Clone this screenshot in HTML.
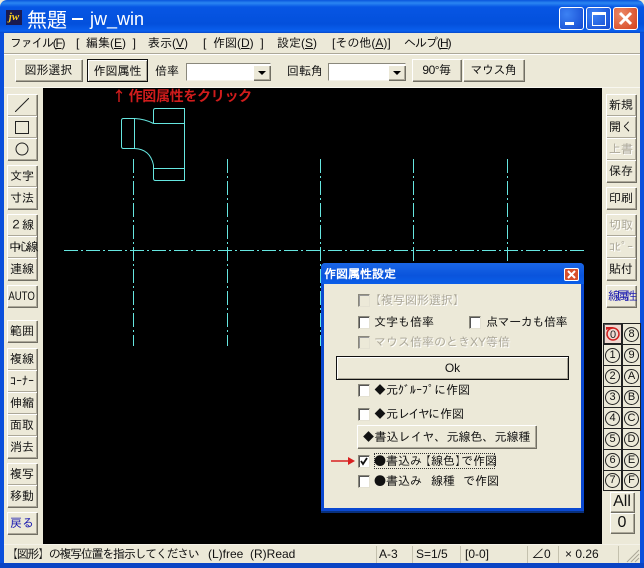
<!DOCTYPE html>
<html lang="ja"><head><meta charset="utf-8"><title>無題 - jw_win</title>
<style>
html,body{margin:0;padding:0;background:#0a3ccc}
#w{position:relative;width:644px;height:568px;overflow:hidden;background:#ECE9D8;font:12px/1 "Liberation Sans","IPAGothic","Noto Sans CJK JP",sans-serif;color:#111}
#w div{position:absolute;box-sizing:border-box;white-space:nowrap}
.b{background:#ECE9D8;box-shadow:inset 1px 1px #fff,inset -1px -1px #aca899,1px 1px #716f64;display:flex;align-items:center;justify-content:center;left:7px;width:30px;height:22px}
.r{left:606px}
.g{color:#aca899;text-shadow:1px 1px #fff}
.l{width:19px;height:21px;background:#ECE9D8;border:1px solid #222;border-width:1px 1px 0 1px;display:flex;align-items:center;justify-content:center}
.o{display:block;box-sizing:border-box;width:15px;height:15px;border:1px solid #222;border-radius:50%;font-size:11px;line-height:13px;text-align:center}
.c{left:358px;width:12px;height:13px;background:#fff;border:1px solid;border-color:#8a887c #e4e1d2 #e4e1d2 #8a887c;box-shadow:inset 1px 1px #555}
.cd{background:#ECE9D8;box-shadow:inset 1px 1px #999}
.t{left:374px;font-size:12px;height:14px;line-height:14px}
.k{font-family:"Noto Sans CJK JP",sans-serif}
.ob{margin-left:-5px}
.cb{margin-right:-6px}
u{text-decoration:underline}
</style></head><body>
<div id="w">
<!-- title bar -->
<div style="left:0;top:0;width:644px;height:33px;background:linear-gradient(#0a55dc 0,#2b86f2 3px,#0756e4 7px,#0350dc 24px,#0a60ee 31px,#0748c8 33px);border-radius:7px 7px 0 0"></div>
<div style="left:6px;top:10px;width:16px;height:15px;background:#1a1a50;color:#ffd21e;font:italic bold 11px/15px 'Liberation Serif',serif;text-align:center">jw</div>
<div style="left:27px;top:8px;color:#fff;font-size:20px;line-height:22px;font-family:'Noto Sans CJK JP',sans-serif">無題</div>
<div style="left:72px;top:18px;width:11px;height:2px;background:#fff"></div>
<div style="left:90px;top:9px;color:#fff;font-size:18px;line-height:20px">jw_win</div>
<div style="left:559px;top:7px;width:25px;height:23px;border-radius:3px;border:1px solid #fff;background:radial-gradient(circle at 30% 30%,#3c82f4,#1348d0)"></div>
<div style="left:565px;top:22px;width:9px;height:3px;background:#fff"></div>
<div style="left:586px;top:7px;width:25px;height:23px;border-radius:3px;border:1px solid #fff;background:radial-gradient(circle at 30% 30%,#3c82f4,#1348d0)"></div>
<div style="left:592px;top:12px;width:14px;height:14px;border:1px solid #fff;border-top:3px solid #fff"></div>
<div style="left:613px;top:7px;width:25px;height:23px;border-radius:3px;border:1px solid #fff;background:radial-gradient(circle at 30% 30%,#ec8a68,#d4401c)"></div>
<svg style="position:absolute;left:613px;top:7px" width="25" height="23"><path d="M7 6L18 17M18 6L7 17" stroke="#fff" stroke-width="3"/></svg>
<!-- side borders -->
<div style="left:0;top:33px;width:4px;height:535px;background:#0a4fdc"></div>
<div style="left:640px;top:33px;width:4px;height:535px;background:#0a4fdc"></div>
<div style="left:0;top:563px;width:644px;height:5px;background:#0a44c4"></div>
<!-- menu -->
<div style="left:4px;top:53px;width:636px;height:2px;background:linear-gradient(#aca899 50%,#fff 50%)"></div>
<div style="left:10px;top:37px;letter-spacing:-1.300px">ファイル(<u>F</u>)</div>
<div style="left:76px;top:37px">[&nbsp;&nbsp;編集(<u>E</u>)&nbsp;&nbsp;]</div>
<div style="left:148px;top:37px">表示(<u>V</u>)</div>
<div style="left:203px;top:37px">[&nbsp;&nbsp;作図(<u>D</u>)&nbsp;&nbsp;]</div>
<div style="left:277px;top:37px">設定(<u>S</u>)</div>
<div style="left:332px;top:37px">[その他(<u>A</u>)]</div>
<div style="left:404px;top:37px;letter-spacing:-1px">ヘルプ(<u>H</u>)</div>
<!-- toolbar -->
<div class="b" style="left:15px;top:59px;width:67px;height:22px">図形選択</div>
<div class="b" style="left:87px;top:59px;width:61px;height:23px;border:1px solid #111;box-shadow:inset 1px 1px #fff,inset -1px -1px #aca899">作図属性</div>
<div style="left:155px;top:65px">倍率</div>
<div style="left:186px;top:63px;width:85px;height:18px;background:#fff;border:1px solid;border-color:#8a887c #f4f2e8 #f4f2e8 #8a887c"></div>
<div class="b" style="left:253px;top:65px;width:17px;height:15px"><svg width="8" height="4"><path d="M0 0H8L4 4Z" fill="#000"/></svg></div>
<div style="left:287px;top:65px">回転角</div>
<div style="left:328px;top:63px;width:78px;height:18px;background:#fff;border:1px solid;border-color:#8a887c #f4f2e8 #f4f2e8 #8a887c"></div>
<div class="b" style="left:388px;top:65px;width:17px;height:15px"><svg width="8" height="4"><path d="M0 0H8L4 4Z" fill="#000"/></svg></div>
<div class="b" style="left:412px;top:59px;width:49px;height:22px;letter-spacing:-.5px">90°毎</div>
<div class="b" style="left:463px;top:59px;width:61px;height:22px;letter-spacing:-.5px">マウス角</div>
<!-- canvas -->
<div style="left:43px;top:88px;width:559px;height:456px;background:#000"></div>
<div style="left:4px;top:87px;width:636px;height:1px;background:#f8f7f0"></div>
<svg style="position:absolute;left:43px;top:88px" width="559" height="456" fill="none" stroke="#66e6e0" stroke-width="1">
<g stroke-dasharray="14 3 2 3">
<path d="M90.500 71V258M184.500 71V258M277.500 71V258M370.500 71V258M464.500 71V258"/>
<path d="M21 162.500H542"/>
</g>
<path d="M110.500 35.500V22.500Q110.500 20.500 112.500 20.500H141.500V92.500H112.500Q110.500 92.500 110.500 90.500V77M110.500 35.500H141.500M110.500 80.500H141.500"/>
<path d="M91.500 30.500H80.500Q78.500 30.500 78.500 32.500V58.500Q78.500 60.500 80.500 60.500H91.500V30.500Q102 31 110.500 35.500M91.500 60.500Q107 61 110.500 77"/>
</svg>
<div style="left:112px;top:88px;color:#d01c1c;font-size:14px;line-height:16px;font-weight:bold;font-family:'Noto Sans CJK JP',sans-serif;letter-spacing:-.3px">↑ 作図属性をクリック</div>
<!-- left buttons -->
<div class="b" style="top:94px"><svg width="14" height="14"><path d="M0 14L14 0" stroke="#222"/></svg></div>
<div class="b" style="top:116px"><svg width="14" height="13"><rect x=".5" y=".5" width="13" height="12" fill="none" stroke="#222"/></svg></div>
<div class="b" style="top:138px"><svg width="14" height="14"><circle cx="7" cy="7" r="6" fill="none" stroke="#222"/></svg></div>
<div class="b" style="top:165px">文字</div>
<div class="b" style="top:187px">寸法</div>
<div class="b" style="top:214px">２線</div>
<div class="b" style="top:236px;letter-spacing:-3.300px">中心線</div>
<div class="b" style="top:258px">連線</div>
<div class="b" style="top:285px"><span style="display:block;transform:scaleX(.8)">AUTO</span></div>
<div class="b" style="top:320px">範囲</div>
<div class="b" style="top:348px">複線</div>
<div class="b" style="top:370px">ｺｰﾅｰ</div>
<div class="b" style="top:392px">伸縮</div>
<div class="b" style="top:414px">面取</div>
<div class="b" style="top:436px">消去</div>
<div class="b" style="top:463px">複写</div>
<div class="b" style="top:485px">移動</div>
<div class="b" style="top:512px;color:#1a1ab0">戻る</div>
<!-- right buttons -->
<div class="b r" style="top:94px">新規</div>
<div class="b r" style="top:116px">開く</div>
<div class="b r g" style="top:138px">上書</div>
<div class="b r" style="top:160px">保存</div>
<div class="b r" style="top:187px">印刷</div>
<div class="b r g" style="top:214px">切取</div>
<div class="b r g" style="top:236px">ｺﾋﾟｰ</div>
<div class="b r" style="top:258px">貼付</div>
<div class="b r" style="top:285px;color:#1a1ab0;letter-spacing:-3.300px">線属性</div>
<!-- layers -->
<div class="l" style="left:603px;top:323px;background:#f0d8d0;border:1px solid #222;box-shadow:inset 1px 1px #555">
<svg width="15" height="15"><circle cx="8" cy="8" r="6" fill="none" stroke="#d02020" stroke-width="1.500"/><path d="M1 1H9L1 4Z" fill="#d02020"/><text x="8" y="12" font-size="11" text-anchor="middle" fill="#222" font-family="Liberation Sans">0</text></svg></div>
<div class="l" style="left:622px;top:323px"><span class="o">8</span></div>
<div class="l" style="left:603px;top:344px"><span class="o">1</span></div><div class="l" style="left:622px;top:344px"><span class="o">9</span></div>
<div class="l" style="left:603px;top:365px"><span class="o">2</span></div><div class="l" style="left:622px;top:365px"><span class="o">A</span></div>
<div class="l" style="left:603px;top:386px"><span class="o">3</span></div><div class="l" style="left:622px;top:386px"><span class="o">B</span></div>
<div class="l" style="left:603px;top:407px"><span class="o">4</span></div><div class="l" style="left:622px;top:407px"><span class="o">C</span></div>
<div class="l" style="left:603px;top:428px"><span class="o">5</span></div><div class="l" style="left:622px;top:428px"><span class="o">D</span></div>
<div class="l" style="left:603px;top:449px"><span class="o">6</span></div><div class="l" style="left:622px;top:449px"><span class="o">E</span></div>
<div class="l" style="left:603px;top:470px;border-bottom-width:1px"><span class="o">7</span></div><div class="l" style="left:622px;top:470px;border-bottom-width:1px"><span class="o">F</span></div>
<div class="b" style="left:610px;top:492px;width:24px;height:20px;font-size:16px">All</div>
<div class="b" style="left:610px;top:513px;width:24px;height:20px;font-size:16px">0</div>
<!-- status bar -->
<div style="left:4px;top:544px;width:636px;height:19px;background:#ECE9D8;border-top:1px solid #f4f2e8"></div>
<div style="left:6px;top:548px;letter-spacing:-1.300px">【図形】の複写位置を指示してください</div>
<div style="left:208px;top:548px">(L)free</div>
<div style="left:250px;top:548px">(R)Read</div>
<div style="left:376px;top:546px;width:1px;height:17px;background:#c4c1ae"></div>
<div style="left:412px;top:546px;width:1px;height:17px;background:#c4c1ae"></div>
<div style="left:460px;top:546px;width:1px;height:17px;background:#c4c1ae"></div>
<div style="left:527px;top:546px;width:1px;height:17px;background:#c4c1ae"></div>
<div style="left:558px;top:546px;width:1px;height:17px;background:#c4c1ae"></div>
<div style="left:618px;top:546px;width:1px;height:17px;background:#c4c1ae"></div>
<div style="left:379px;top:548px">A-3</div>
<div style="left:416px;top:548px">S=1/5</div>
<div style="left:465px;top:548px">[0-0]</div>
<div style="left:532px;top:548px">∠0</div>
<div style="left:565px;top:548px">× 0.26</div>
<svg style="position:absolute;left:626px;top:549px" width="14" height="14"><path d="M1 13L13 1M5 13L13 5M9 13L13 9" stroke="#aca899"/></svg>
<!-- dialog -->
<div style="left:321px;top:263px;width:263px;height:250px;background:#0a48d0;border-radius:4px 4px 0 0;box-shadow:inset 0 -2px #08307c"></div>
<div style="left:321px;top:263px;width:263px;height:21px;background:linear-gradient(#1a66e6,#0a54dc 60%,#0a5ee8);border-radius:4px 4px 0 0"></div>
<div style="left:324px;top:268px;color:#fff;font-weight:bold;font-size:12px">作図属性設定</div>
<div style="left:564px;top:268px;width:15px;height:13px;border:1px solid #fff;border-radius:2px;background:#d8502c"></div>
<svg style="position:absolute;left:564px;top:268px" width="15" height="13"><path d="M4 3L11 10M11 3L4 10" stroke="#fff" stroke-width="2"/></svg>
<div style="left:324px;top:284px;width:257px;height:224px;background:#ECE9D8"></div>

<div class="c cd" style="top:294px"></div><div class="t g" style="top:293px"><span class="ob">【</span>複写図形選択<span class="cb">】</span></div>
<div class="c" style="top:316px"></div><div class="t" style="top:315px">文字も倍率</div>
<div class="c" style="left:469px;top:316px"></div><div class="t" style="left:486px;top:315px;letter-spacing:-.4px">点マーカも倍率</div>
<div class="c cd" style="top:336px"></div><div class="t g" style="top:335px">マウス倍率のときXY等倍</div>
<div class="b" style="left:336px;top:356px;width:233px;height:24px;border:1px solid #111;box-shadow:inset 1px 1px #fff,inset -1px -1px #aca899">Ok</div>
<div class="c" style="top:384px"></div><div class="t" style="top:383px">◆元ｸﾞﾙｰﾌﾟに作図</div>
<div class="c" style="top:408px"></div><div class="t" style="top:407px">◆元<span style="letter-spacing:-2px">レイヤ</span>に作図</div>
<div class="b" style="left:357px;top:425px;width:179px;height:23px">◆書込レイヤ、元線色、元線種</div>
<svg style="position:absolute;left:331px;top:456px" width="24" height="10"><path d="M0 5H22" stroke="#d82020" stroke-width="1.500"/><path d="M24 5L17 1V9Z" fill="#d82020"/></svg>
<div class="c" style="top:455px"></div>
<svg style="position:absolute;left:358px;top:455px" width="12" height="13"><path d="M3 6L5 9L9 3" fill="none" stroke="#111" stroke-width="1.800"/></svg>
<div style="left:374px;top:453px;width:121px;height:16px;border:1px dotted #333"></div>
<div class="t" style="top:454px"><span class="k">●</span>書込み<span class="ob" style="margin-left:-3px">【</span>線色<span class="cb">】</span>で作図</div>
<div class="c" style="top:475px"></div><div class="t" style="top:474px"><span class="k">●</span>書込み<span style="margin-left:9px">線種</span><span style="margin-left:8px">で作図</span></div>
</div>
</body></html>
